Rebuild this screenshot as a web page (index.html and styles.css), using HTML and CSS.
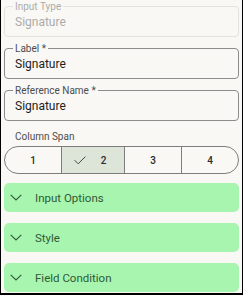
FILE: index.html
```html
<!DOCTYPE html>
<html lang="en">

<head>
  <meta name="viewport" content="width=device-width, initial-scale=1.0">
  <meta charset="utf-8">
  <title>Field settings</title>
  <link rel="stylesheet" href="styles.css">
</head>

<body>
  <div class="panel">
    <fieldset class="field disabled">
      <legend>Input Type</legend>
      <div class="value">Signature</div>
    </fieldset>
    <fieldset class="field">
      <legend>Label *</legend>
      <div class="value">Signature</div>
    </fieldset>
    <fieldset class="field">
      <legend>Reference Name *</legend>
      <div class="value">Signature</div>
    </fieldset>

    <div class="span-label">Column Span</div>
    <div class="segments">
      <div class="seg">1</div>
      <div class="seg current">
        <svg class="check" width="12" height="9" viewBox="0 0 12 9"><path d="M0.6 4.2 L4.2 7.8 L11.4 0.6" fill="none" stroke="#454545" stroke-width="1"/></svg>
        <span>2</span>
      </div>
      <div class="seg">3</div>
      <div class="seg">4</div>
    </div>

    <div class="acc">
      <svg class="chev" width="12" height="7" viewBox="0 0 12 7"><path d="M0.7 0.8 L6 6 L11.3 0.8" fill="none" stroke="#2f5a37" stroke-width="1.1"/></svg>
      <span>Input Options</span>
    </div>
    <div class="acc">
      <svg class="chev" width="12" height="7" viewBox="0 0 12 7"><path d="M0.7 0.8 L6 6 L11.3 0.8" fill="none" stroke="#2f5a37" stroke-width="1.1"/></svg>
      <span>Style</span>
    </div>
    <div class="acc">
      <svg class="chev" width="12" height="7" viewBox="0 0 12 7"><path d="M0.7 0.8 L6 6 L11.3 0.8" fill="none" stroke="#2f5a37" stroke-width="1.1"/></svg>
      <span>Field Condition</span>
    </div>
  </div>
</body>

</html>
```

FILE: styles.css
```css
html, body {
  margin: 0;
  padding: 0;
}

body {
  background: #000;
  font-family: Roboto, "Liberation Sans", sans-serif;
  color: #1d1d1d;
}

.panel {
  width: 235px;
  height: 292px;
  background: #f9f8f4;
  margin-left: 1px;
  padding: 1px 3px 0;
  overflow: hidden;
}

.field {
  margin: 0 0 6px;
  padding: 2px 0 6px;
  border: 1px solid #8c8c8c;
  border-radius: 4px;
  min-width: 0;
}

.field legend {
  font-size: 10px;
  line-height: 11px;
  padding: 0 2px;
  margin-left: 8px;
  color: #4d4d4d;
}

.field .value {
  font-size: 12px;
  line-height: 16px;
  padding-left: 10px;
}

.field.disabled {
  border-color: #e3e2dd;
}

.field.disabled legend,
.field.disabled .value {
  color: #acacac;
}

.span-label {
  font-size: 10px;
  line-height: 12px;
  color: #4d4d4d;
  margin: 10px 0 3px 11px;
}

.segments {
  display: flex;
  height: 26px;
  border: 1px solid #7d7d7d;
  border-radius: 14px;
  overflow: hidden;
  margin-bottom: 9px;
}

.seg {
  flex: 1;
  display: flex;
  align-items: center;
  justify-content: center;
  gap: 15px;
  font-size: 10px;
  font-weight: 500;
  color: #2a2a2a;
  border-left: 1px solid #7d7d7d;
}

.seg:first-child {
  border-left: none;
}

.seg.current {
  background: #dce5d8;
  padding-right: 6px;
}

.acc {
  height: 29px;
  background: #a8f5b0;
  border-radius: 5px;
  display: flex;
  align-items: center;
  gap: 13px;
  padding-left: 6px;
  margin-bottom: 11px;
  font-size: 11.5px;
  color: #2f5a37;
}
```
